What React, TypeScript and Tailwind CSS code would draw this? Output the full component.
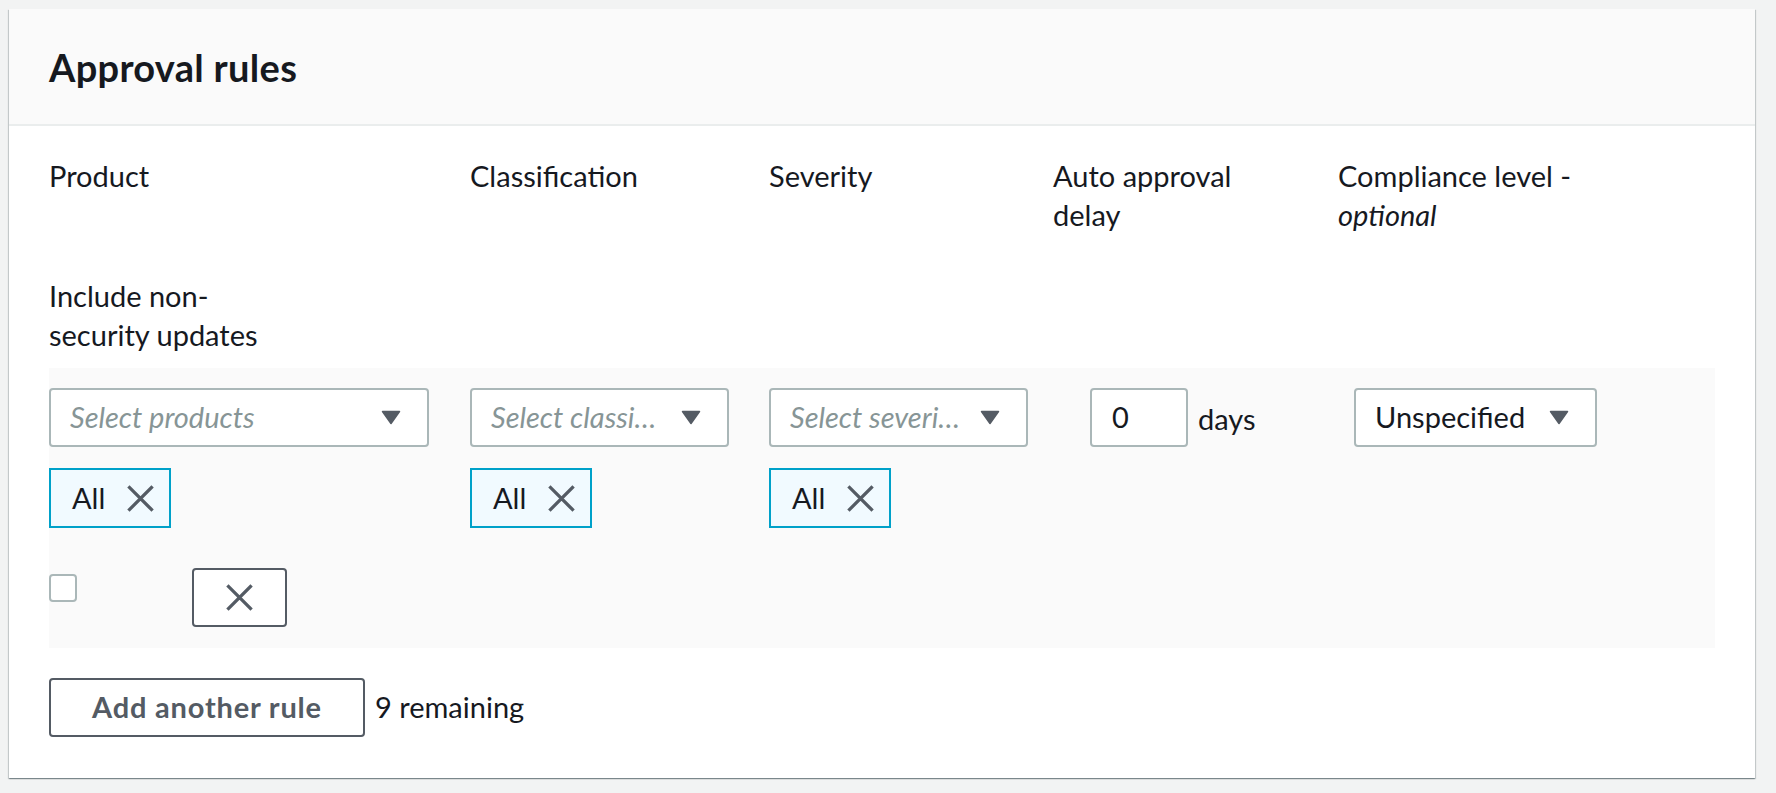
import { ReactNode } from 'react'

function Caret() {
  return (
    <svg width="20" height="15" viewBox="0 0 20 15" className="shrink-0">
      <path d="M1.5 1.5h17L10 13.5z" fill="#545b64" stroke="#545b64" strokeWidth="1.5" strokeLinejoin="round" />
    </svg>
  )
}

function Cross({ size = 27 }: { size?: number }) {
  return (
    <svg width={size} height={size} viewBox="0 0 26 26" className="shrink-0">
      <path d="M2.5 2.5l21 21M23.5 2.5l-21 21" stroke="#545b64" strokeWidth="3.2" strokeLinecap="square" fill="none" />
    </svg>
  )
}

function Select({ text, placeholder, width }: { text: string; placeholder?: boolean; width: string }) {
  return (
    <div
      className={`${width} h-[59px] bg-white border-2 border-[#aab7b8] rounded-[4px] flex items-center justify-between pl-[19px] pr-[26px]`}
    >
      <span className={placeholder ? 'italic text-[#879596]' : 'text-[#16191f]'}>{text}</span>
      <Caret />
    </div>
  )
}

function Token() {
  return (
    <div className="mt-[21px] w-[122px] h-[60px] bg-[#f1faff] border-2 border-[#00a1c9] flex items-center justify-between pl-[21px] pr-[15px]">
      <span className="text-[#16191f]">All</span>
      <Cross />
    </div>
  )
}

function Label({ children, width }: { children: ReactNode; width: string }) {
  return <div className={`${width} shrink-0 text-[#16191f]`}>{children}</div>
}

export default function App() {
  return (
    <div className="min-h-screen bg-[#f2f3f3] pt-[9px] pl-[9px] font-[Lato,sans-serif] text-[29px] leading-[38.5px]">
      <div className="w-[1746px] bg-white shadow-[0_1px_1px_0_rgba(0,28,36,0.3),1px_1px_1px_0_rgba(0,28,36,0.15),-1px_1px_1px_0_rgba(0,28,36,0.15)]">
        {/* Header */}
        <div className="h-[117px] bg-[#fafafa] border-b-2 border-[#eaeded] flex items-center px-[40px] pt-[1px]">
          <h2 className="text-[38px] font-bold text-[#16191f] tracking-[0.3px]">Approval rules</h2>
        </div>

        <div className="px-[40px] pt-[31px] pb-[41px]">
          {/* Column labels */}
          <div className="flex">
            <Label width="w-[421px]">Product</Label>
            <Label width="w-[299px]">Classification</Label>
            <Label width="w-[284px]">Severity</Label>
            <Label width="w-[285px]">
              Auto approval
              <br />
              delay
            </Label>
            <Label width="flex-1">
              Compliance level -
              <br />
              <span className="italic">optional</span>
            </Label>
          </div>
          <div className="mt-[43px] text-[#16191f]">
            Include non-
            <br />
            security updates
          </div>

          {/* Rule row */}
          <div className="mt-[14px] bg-[#fafafa] pt-[20px] pb-[21px]">
            <div className="flex items-start">
              <div className="w-[421px] shrink-0">
                <Select text="Select products" placeholder width="w-[380px]" />
                <Token />
              </div>
              <div className="w-[299px] shrink-0">
                <Select text="Select classi…" placeholder width="w-[259px]" />
                <Token />
              </div>
              <div className="w-[284px] shrink-0">
                <Select text="Select severi…" placeholder width="w-[259px]" />
                <Token />
              </div>
              <div className="w-[285px] shrink-0 pl-[37px] flex items-center">
                <div className="w-[98px] h-[59px] bg-white border-2 border-[#aab7b8] rounded-[4px] flex items-center pl-[20px] text-[#16191f]">
                  0
                </div>
                <span className="ml-[10px] pt-[3px] text-[#16191f]">days</span>
              </div>
              <div className="flex-1 pl-[16px]">
                <Select text="Unspecified" width="w-[243px]" />
              </div>
            </div>

            <div className="mt-[40px] flex items-start">
              <div className="mt-[6px] w-[28px] h-[28px] bg-white border-2 border-[#aab7b8] rounded-[4px]" />
              <button className="ml-[115px] w-[95px] h-[59px] bg-white border-2 border-[#545b64] rounded-[4px] flex items-center justify-center">
                <Cross />
              </button>
            </div>
          </div>

          {/* Footer */}
          <div className="mt-[30px] flex items-center">
            <button className="w-[316px] h-[59px] bg-white border-2 border-[#545b64] rounded-[4px] text-[29px] font-bold text-[#545b64] tracking-[0.8px]">
              Add another rule
            </button>
            <span className="ml-[10px] text-[#16191f]">9 remaining</span>
          </div>
        </div>
      </div>
    </div>
  )
}
